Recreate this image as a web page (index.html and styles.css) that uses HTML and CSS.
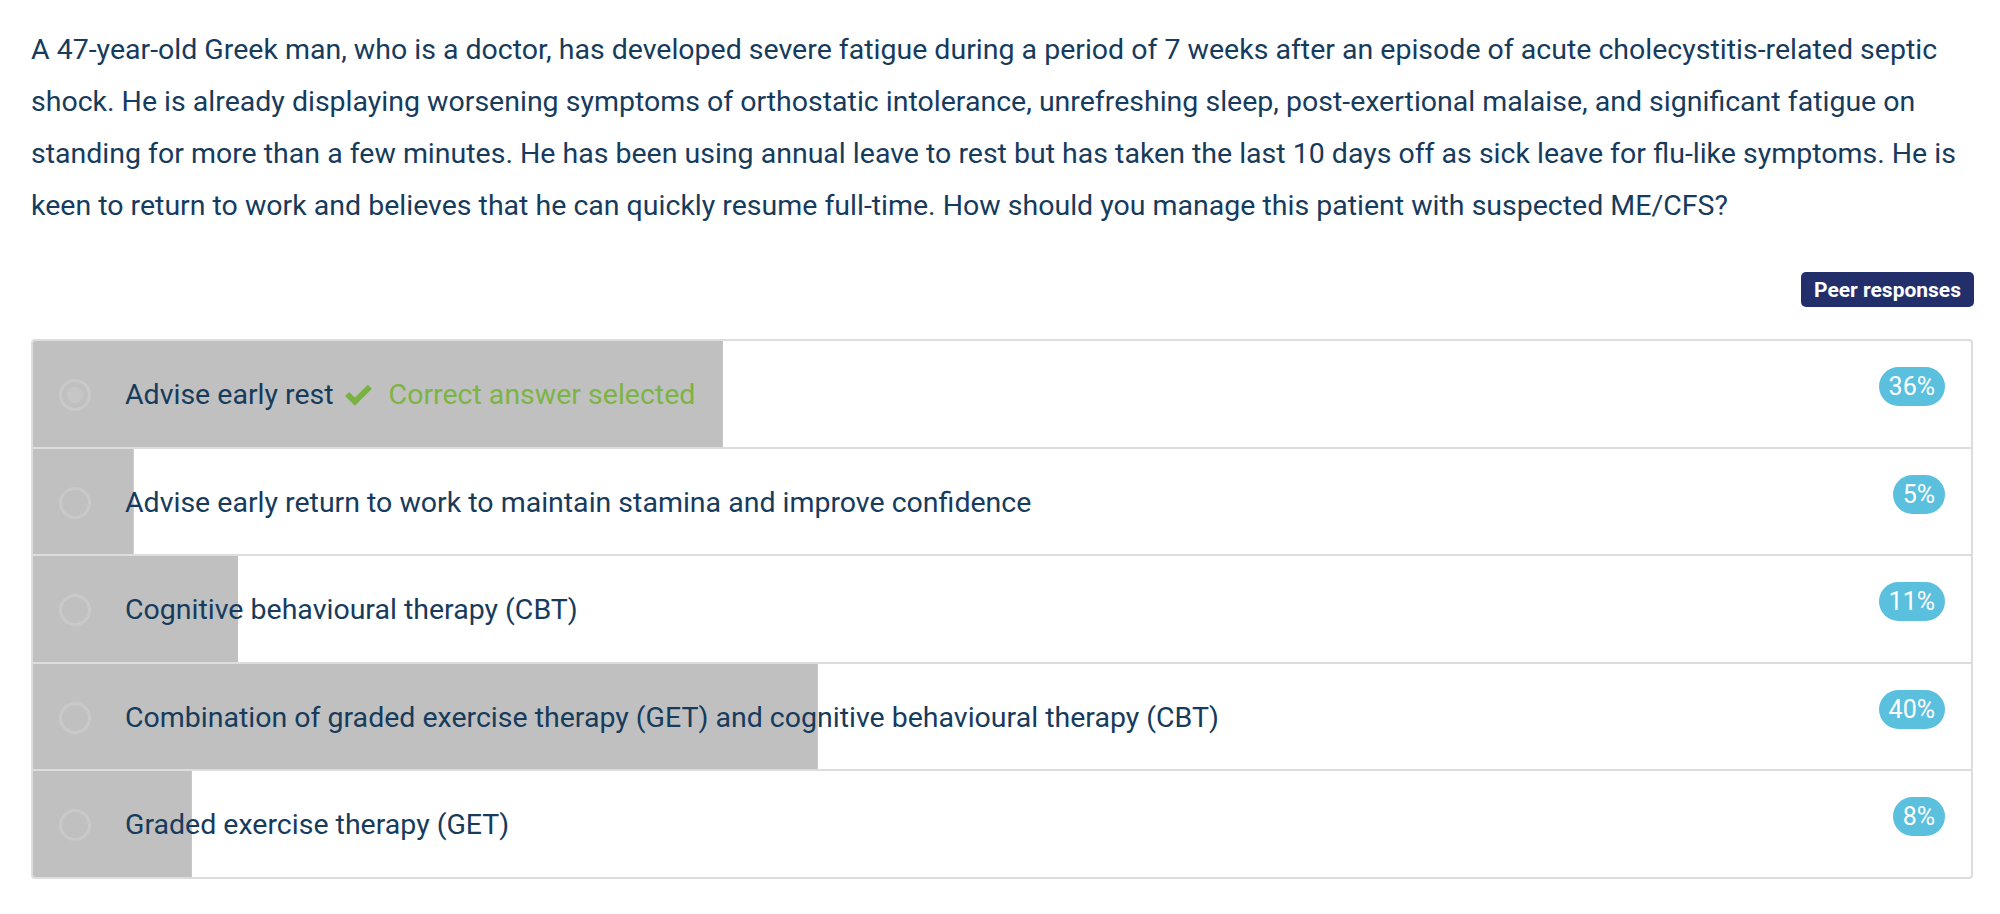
FILE: index.html
```html
<!DOCTYPE html>
<html lang="en">
<head>
<meta charset="utf-8">
<title>Question</title>
<link rel="stylesheet" href="styles.css">
</head>
<body>
<main class="page">
  <p class="stem">A 47-year-old Greek man, who is a doctor, has developed severe fatigue during a period of 7 weeks after an episode of acute cholecystitis-related septic shock. He is already displaying worsening symptoms of orthostatic intolerance, unrefreshing sleep, post-exertional malaise, and significant fatigue on standing for more than a few minutes. He has been using annual leave to rest but has taken the last 10 days off as sick leave for flu-like symptoms. He is keen to return to work and believes that he can quickly resume full-time. How should you manage this patient with suspected ME/CFS?</p>

  <div class="toolbar">
    <button class="peer-btn" type="button">Peer responses</button>
  </div>

  <ul class="answers">
    <li class="answer" style="--pct:35.6%">
      <span class="radio selected"></span>
      <span class="label">Advise early rest
        <svg class="tick" viewBox="0 0 28 22" width="29" height="23" aria-hidden="true"><path d="M1 11.5 L5 7.5 L10.5 13 L23 0.5 L27 4.5 L10.5 21 Z" fill="#78b342"/></svg>
        <span class="correct">Correct answer selected</span>
      </span>
      <span class="badge">36%</span>
    </li>
    <li class="answer" style="--pct:5.2%">
      <span class="radio"></span>
      <span class="label">Advise early return to work to maintain stamina and improve confidence</span>
      <span class="badge">5%</span>
    </li>
    <li class="answer" style="--pct:10.6%">
      <span class="radio"></span>
      <span class="label">Cognitive behavioural therapy (CBT)</span>
      <span class="badge">11%</span>
    </li>
    <li class="answer" style="--pct:40.5%">
      <span class="radio"></span>
      <span class="label">Combination of graded exercise therapy (GET) and cognitive behavioural therapy (CBT)</span>
      <span class="badge">40%</span>
    </li>
    <li class="answer" style="--pct:8.2%">
      <span class="radio"></span>
      <span class="label">Graded exercise therapy (GET)</span>
      <span class="badge">8%</span>
    </li>
  </ul>
</main>
</body>
</html>
```

FILE: styles.css
```css
html, body {
  margin: 0;
  padding: 0;
  background: #ffffff;
}

body {
  font-family: Roboto, "Liberation Sans", Arial, sans-serif;
  color: #163b5c;
}

.page {
  padding: 24px 27px 0 31px;
}

.stem {
  margin: 0;
  font-size: 28.5px;
  line-height: 52px;
  color: #163b5c;
}

.toolbar {
  display: flex;
  justify-content: flex-end;
  margin-top: 40px;
}

.peer-btn {
  font-family: Roboto, "Liberation Sans", Arial, sans-serif;
  font-weight: 700;
  font-size: 21px;
  color: #ffffff;
  background: #232f6b;
  border: none;
  border-radius: 5px;
  height: 35px;
  padding: 0 13px;
  margin-right: -1px;
}

.answers {
  list-style: none;
  margin: 32px 0 0 0;
  padding: 0;
  border: 2px solid #dddddd;
  border-radius: 4px;
  overflow: hidden;
}

.answer {
  display: flex;
  align-items: flex-start;
  height: 105.5px;
  border-top: 2px solid #dddddd;
  background-image: linear-gradient(#c0c0c0, #c0c0c0);
  background-repeat: no-repeat;
  background-size: var(--pct) 100%;
}

.answer:first-child {
  border-top: none;
}

.radio {
  flex: none;
  width: 32px;
  height: 32px;
  box-sizing: border-box;
  border: 3px solid #c9c9c9;
  border-radius: 50%;
  margin: 38px 0 0 26px;
  display: flex;
  align-items: center;
  justify-content: center;
}

.radio.selected::after {
  content: "";
  width: 16px;
  height: 16px;
  border-radius: 50%;
  background: #c6c6c6;
}

.label {
  flex: 1;
  display: flex;
  align-items: center;
  font-size: 28.5px;
  line-height: 32px;
  margin: 38px 0 0 34px;
  color: #163b5c;
  white-space: nowrap;
}

.tick {
  margin: 0 16px 0 10px;
}

.correct {
  color: #7cb445;
}

.badge {
  flex: none;
  margin: 26px 26px 0 0;
  height: 39px;
  line-height: 39px;
  padding: 0 10px;
  border-radius: 20px;
  background: #5bc0de;
  color: #ffffff;
  font-size: 25px;
}
```
